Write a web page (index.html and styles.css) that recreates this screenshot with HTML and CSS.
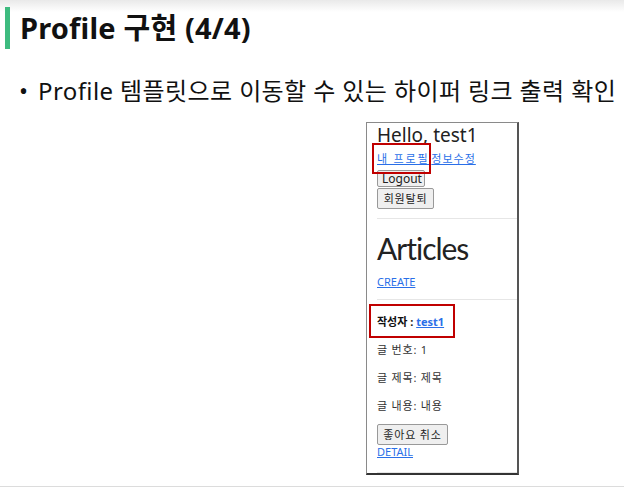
FILE: index.html
```html
<!DOCTYPE html>
<html lang="ko">
<head>
<meta charset="utf-8">
<title>Profile 구현 (4/4)</title>
<link rel="stylesheet" href="styles.css">
</head>
<body>
<div class="slide">
  <header class="slide-title">
    <span class="accent"></span>
    <h1>Profile 구현 (4/4)</h1>
  </header>
  <ul class="points">
    <li>Profile 템플릿으로 이동할 수 있는 하이퍼 링크 출력 확인</li>
  </ul>
  <div class="shot">
    <div class="hello">Hello, test1</div>
    <div class="links"><span class="mark mark-profile"><a href="#">내 프로필</a></span><a class="edit" href="#">정보수정</a></div>
    <div class="btn-row"><button class="btn btn-logout">Logout</button></div>
    <div class="btn-row"><button class="btn btn-quit">회원탈퇴</button></div>
    <hr class="rule rule-1">
    <h2 class="articles">Articles</h2>
    <div class="create"><a href="#">CREATE</a></div>
    <hr class="rule rule-2">
    <div class="article">
      <div class="author"><span class="mark mark-author"><b>작성자 : <a href="#">test1</a></b></span></div>
      <p class="field">글 번호: 1</p>
      <p class="field">글 제목: 제목</p>
      <p class="field">글 내용: 내용</p>
      <div class="btn-row"><button class="btn btn-like">좋아요 취소</button></div>
      <div class="detail"><a href="#">DETAIL</a></div>
      <hr class="rule rule-3">
    </div>
  </div>
  <div class="bottom-line"></div>
</div>
</body>
</html>
```
FILE: styles.css
```css
html, body {
  margin: 0;
  padding: 0;
  background: #fff;
}
body {
  width: 624px;
  height: 487px;
  overflow: hidden;
  font-family: "Noto Sans", "Noto Sans CJK KR", sans-serif;
  color: #111;
}
.slide {
  position: relative;
  height: 487px;
  background: linear-gradient(#e9e9e9 0px, #ffffff 12px);
}
.slide-title {
  display: flex;
  align-items: center;
  gap: 10px;
  padding: 7px 0 0 5px;
  height: 42px;
}
.accent {
  display: block;
  width: 5px;
  height: 42px;
  background: #3dbb7f;
}
.slide-title h1 {
  margin: 0;
  font-size: 29px;
  font-weight: 700;
  line-height: 42px;
  color: #111;
  letter-spacing: 0.2px;
}
.points {
  list-style: none;
  margin: 26px 0 0 0;
  padding: 0 0 0 19px;
}
.points li {
  font-size: 24px;
  line-height: 32px;
  color: #111;
  white-space: nowrap;
  letter-spacing: 0.4px;
}
.points li::before {
  content: "•";
  display: inline-block;
  width: 19px;
}
.shot {
  margin: 15px 0 0 366px;
  width: 153px;
  height: 353px;
  border: 1px solid #8a8a8a;
  border-right: 2px solid #555;
  border-bottom: 2px solid #333;
  padding: 0 0 0 10px;
  box-sizing: border-box;
  font-family: "Noto Sans", "Noto Sans CJK KR", sans-serif;
  color: #222;
  overflow: hidden;
}
.shot a {
  color: #2a6fe8;
  text-decoration: underline;
}
.hello {
  font-size: 19px;
  line-height: 24px;
  color: #222;
  height: 24px;
}
.links {
  font-size: 11px;
  line-height: 14px;
  padding-top: 5px;
  height: 17px;
  white-space: nowrap;
  letter-spacing: 1.8px;
}
.links .edit {
  margin-left: 2px;
  letter-spacing: 1px;
}
.mark {
  position: relative;
}
.mark::after {
  content: "";
  position: absolute;
  border: 2px solid #c00000;
}
.mark-profile::after {
  left: -5px;
  right: -2px;
  top: -8px;
  bottom: -8px;
}
.mark-author::after {
  left: -8px;
  right: -11px;
  top: -10px;
  bottom: -9px;
}
.btn-row {
  display: block;
  line-height: 0;
}
.btn {
  font-family: "Noto Sans", "Noto Sans CJK KR", sans-serif;
  font-size: 11px;
  color: #222;
  background: #efefef;
  border: 1px solid #999;
  border-radius: 2px;
  padding: 0 4px;
  margin: 0;
  line-height: 14px;
}
.btn-logout {
  height: 17px;
  width: 48px;
  margin-top: 1px;
  font-size: 12px;
}
.btn-quit {
  height: 21px;
  width: 57px;
  margin-top: 1px;
  letter-spacing: 0.8px;
}
.rule {
  border: 0;
  border-top: 1px solid #e6e6e6;
  margin: 0 -10px 0 0;
}
.rule-1 {
  margin-top: 9px;
}
.articles {
  margin: 0;
  padding-top: 11px;
  font-family: Lato, "Noto Sans", sans-serif;
  font-size: 30px;
  font-weight: 400;
  line-height: 36px;
  color: #222;
  letter-spacing: -1px;
}
.create {
  font-size: 11px;
  line-height: 14px;
  padding-top: 9px;
  height: 16px;
}
.rule-2 {
  margin-top: 8px;
}
.author {
  font-size: 11px;
  line-height: 14px;
  padding-top: 15px;
  height: 14px;
}
.author b {
  color: #111;
}
.field {
  margin: 0;
  font-size: 11px;
  line-height: 14px;
  padding-top: 14px;
  color: #333;
  letter-spacing: 0.8px;
}
.btn-like {
  height: 21px;
  width: 71px;
  margin-top: 11px;
  letter-spacing: 0.8px;
}
.detail {
  font-size: 11px;
  line-height: 14px;
  height: 14px;
}
.rule-3 {
  margin-top: 13px;
}
.bottom-line {
  position: absolute;
  left: 0;
  right: 0;
  bottom: 0;
  height: 1px;
  background: #dcdcdc;
}
```
